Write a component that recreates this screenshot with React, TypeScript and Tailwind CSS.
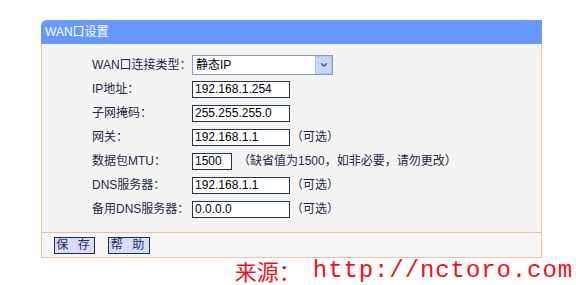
import { ChevronDown } from 'lucide-react';

const FONT = { fontFamily: '"Liberation Sans", "Noto Sans CJK SC", sans-serif' };

const ROWS = [
  { label: 'IP地址：', value: '192.168.1.254', w: 'w-[98px]', note: '' },
  { label: '子网掩码：', value: '255.255.255.0', w: 'w-[98px]', note: '' },
  { label: '网关：', value: '192.168.1.1', w: 'w-[98px]', note: '（可选）' },
  { label: '数据包MTU：', value: '1500', w: 'w-[40px]', note: '（缺省值为1500，如非必要，请勿更改）' },
  { label: 'DNS服务器：', value: '192.168.1.1', w: 'w-[98px]', note: '（可选）' },
  { label: '备用DNS服务器：', value: '0.0.0.0', w: 'w-[98px]', note: '（可选）' },
];

export default function App() {
  return (
    <div className="w-[576px] h-[285px] bg-white overflow-hidden text-[12px]" style={FONT}>
      <div className="pt-5 pl-[41px]">
        <div className="w-[501px]">
          <div className="h-6 bg-[#6699ff] rounded-tl-[6px] text-white pl-1 leading-6 text-[12px]">WAN口设置</div>

          <div className="h-[188px] bg-[#f4f4f4] border-x border-[#e8c39a] pt-[9px] text-[#1f2a44]">
            <div className="flex items-center h-6">
              <div className="w-[50px]" />
              <div className="w-[100px]">WAN口连接类型：</div>
              <div className="w-[141px] h-5 border border-[#7f9db9] bg-white flex items-center justify-between">
                <span className="pl-[3px] text-black">静态IP</span>
                <span className="w-[17px] h-[18px] bg-[#c6d6f7] border border-[#b3c7ec] flex items-center justify-center">
                  <ChevronDown className="w-[10px] h-[10px] text-[#4d6185]" strokeWidth={3.5} />
                </span>
              </div>
            </div>

            {ROWS.map(r => (
              <div key={r.label} className="flex items-center h-6">
                <div className="w-[50px]" />
                <div className="w-[100px]">{r.label}</div>
                <div className={`${r.w} h-[17px] border border-[#25364a] bg-white pl-[2px] leading-[15px] text-black`}>{r.value}</div>
                {r.note && <span className={r.w === 'w-[40px]' ? 'ml-[6px]' : 'ml-[1px]'}>{r.note}</span>}
              </div>
            ))}
          </div>

          <div className="h-[26px] bg-[#f6f6f6] border border-[#e8c39a] flex items-center pl-[12px] gap-[13px]">
            <button className="w-[41px] h-[17px] bg-[#d9dcf7] border border-[#1b2c5a] text-[#1b2c5a] leading-[15px] tracking-[3px]">保 存</button>
            <button className="w-[42px] h-[17px] bg-[#d9dcf7] border border-[#1b2c5a] text-[#1b2c5a] leading-[15px] tracking-[3px]">帮 助</button>
          </div>
        </div>
      </div>

      <div className="flex justify-end items-center pr-[3px] h-[25px] text-[#e8141a] whitespace-nowrap">
        <span className="text-[22px] leading-[25px]" style={{ fontFamily: '"Noto Sans CJK SC", serif' }}>来源：</span>
        <span className="text-[24px] leading-[25px] ml-[12px]" style={{ fontFamily: '"Liberation Mono", monospace', letterSpacing: '0.9px' }}>http://nctoro.com</span>
      </div>
    </div>
  );
}
